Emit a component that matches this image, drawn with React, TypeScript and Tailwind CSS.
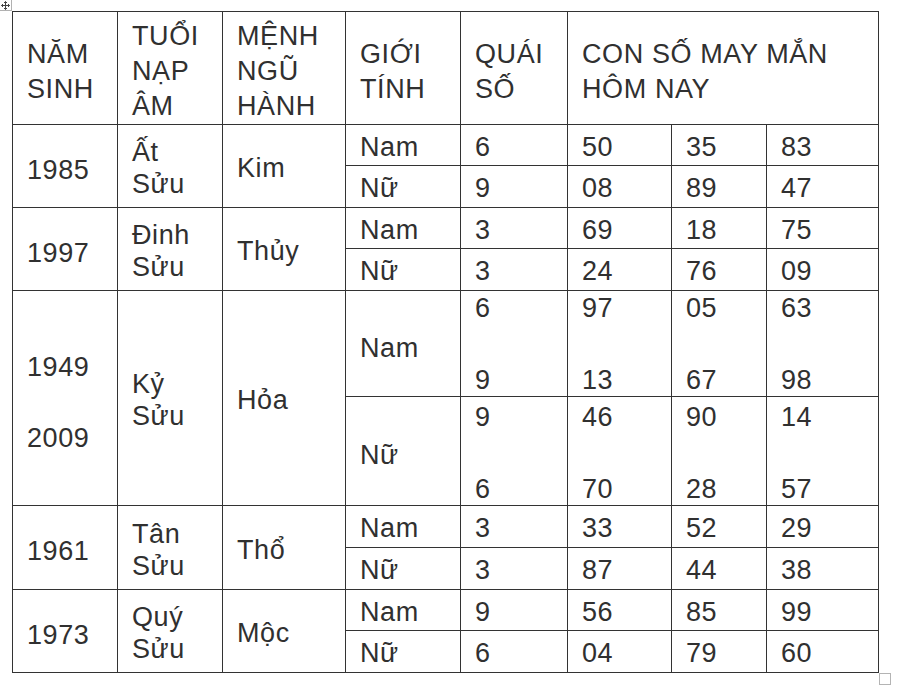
import React from 'react';

type Group = {
  years: string[];
  can: string[];
  menh: string;
  tall?: boolean;
  nam: { quai: string[]; nums: string[][] };
  nu: { quai: string[]; nums: string[][] };
};

const groups: Group[] = [
  {
    years: ['1985'],
    can: ['Ất', 'Sửu'],
    menh: 'Kim',
    nam: { quai: ['6'], nums: [['50'], ['35'], ['83']] },
    nu: { quai: ['9'], nums: [['08'], ['89'], ['47']] },
  },
  {
    years: ['1997'],
    can: ['Đinh', 'Sửu'],
    menh: 'Thủy',
    nam: { quai: ['3'], nums: [['69'], ['18'], ['75']] },
    nu: { quai: ['3'], nums: [['24'], ['76'], ['09']] },
  },
  {
    years: ['1949', '2009'],
    can: ['Kỷ', 'Sửu'],
    menh: 'Hỏa',
    tall: true,
    nam: { quai: ['6', '9'], nums: [['97', '13'], ['05', '67'], ['63', '98']] },
    nu: { quai: ['9', '6'], nums: [['46', '70'], ['90', '28'], ['14', '57']] },
  },
  {
    years: ['1961'],
    can: ['Tân', 'Sửu'],
    menh: 'Thổ',
    nam: { quai: ['3'], nums: [['33'], ['52'], ['29']] },
    nu: { quai: ['3'], nums: [['87'], ['44'], ['38']] },
  },
  {
    years: ['1973'],
    can: ['Quý', 'Sửu'],
    menh: 'Mộc',
    nam: { quai: ['9'], nums: [['56'], ['85'], ['99']] },
    nu: { quai: ['6'], nums: [['04'], ['79'], ['60']] },
  },
];

const headers = [
  ['NĂM', 'SINH'],
  ['TUỔI', 'NẠP', 'ÂM'],
  ['MỆNH', 'NGŨ', 'HÀNH'],
  ['GIỚI', 'TÍNH'],
  ['QUÁI', 'SỐ'],
];

function Lines({ lines }: { lines: string[] }) {
  return (
    <>
      {lines.map((l, i) => (
        <span key={i} className="block">
          {l}
        </span>
      ))}
    </>
  );
}

// one sub row (Nam or Nữ) for the quái số + lucky numbers
function SubCells({
  gender,
  data,
  tall,
  first,
}: {
  gender: string;
  data: { quai: string[]; nums: string[][] };
  tall?: boolean;
  first: boolean;
}) {
  const stackCls = tall
    ? `bg-white pl-[14px] flex flex-col justify-between ${first ? 'pt-[1px]' : 'pt-[4px]'}`
    : 'bg-white pl-[14px] flex flex-col justify-center pt-[3px]';
  return (
    <>
      <div
        className={`bg-white pl-[14px] flex flex-col justify-center ${tall ? 'pt-[8px]' : 'pt-[3px]'}`}
      >
        {gender}
      </div>
      <div className={stackCls}>
        <Lines lines={data.quai} />
      </div>
      {data.nums.map((n, i) => (
        <div key={i} className={stackCls}>
          <Lines lines={n} />
        </div>
      ))}
    </>
  );
}

export default function App() {
  return (
    <div className="relative w-[900px] h-[688px] bg-white text-[#303030] font-['Liberation_Sans',Arial,sans-serif] text-[27px] tracking-[0.6px] leading-[32px]">
      {/* table move handle */}
      <div className="absolute left-0 top-0 w-[12px] h-[11px] border-r border-b border-[#b1b1b1] flex items-center justify-center">
        <svg width="9" height="9" viewBox="0 0 9 9" fill="none" stroke="#444" strokeWidth="1">
          <path d="M4.5 0.5v8M0.5 4.5h8" />
          <path d="M3 2l1.5-1.5L6 2M3 7l1.5 1.5L6 7M2 3L0.5 4.5 2 6M7 3l1.5 1.5L7 6" />
        </svg>
      </div>

      <div className="pt-[11px] pl-[12px]">
        <div className="w-[867px] p-px bg-[#333333] grid gap-px grid-cols-[104px_104px_122px_114px_106px_103px_94px_111px] grid-rows-[112px_40px_41px_40px_41px_105px_108px_41px_41px_40px_41px]">
          {headers.map((h, i) => (
            <div key={i} className="bg-white pl-[14px] pt-[7px] flex flex-col justify-center leading-[35px]">
              <Lines lines={h} />
            </div>
          ))}
          <div className="col-span-3 bg-white pl-[14px] pt-[7px] flex flex-col justify-center leading-[35px]">
            <Lines lines={['CON SỐ MAY MẮN', 'HÔM NAY']} />
          </div>

          {groups.map((g, gi) => (
            <React.Fragment key={gi}>
              <div
                className={`row-span-2 bg-white pl-[14px] flex flex-col justify-center ${
                  g.tall ? 'pt-[9px] gap-[39px]' : 'pt-[7px]'
                }`}
              >
                <Lines lines={g.years} />
              </div>
              <div className="row-span-2 bg-white pl-[14px] pt-[4px] flex flex-col justify-center">
                <Lines lines={g.can} />
              </div>
              <div className="row-span-2 bg-white pl-[14px] pt-[4px] flex flex-col justify-center">
                {g.menh}
              </div>
              <SubCells gender="Nam" data={g.nam} tall={g.tall} first />
              <SubCells gender="Nữ" data={g.nu} tall={g.tall} first={false} />
            </React.Fragment>
          ))}
        </div>
      </div>

      {/* table resize handle */}
      <div className="absolute left-[879px] top-[673px] w-[12px] h-[12px] border border-[#b4b4b4]" />
    </div>
  );
}
